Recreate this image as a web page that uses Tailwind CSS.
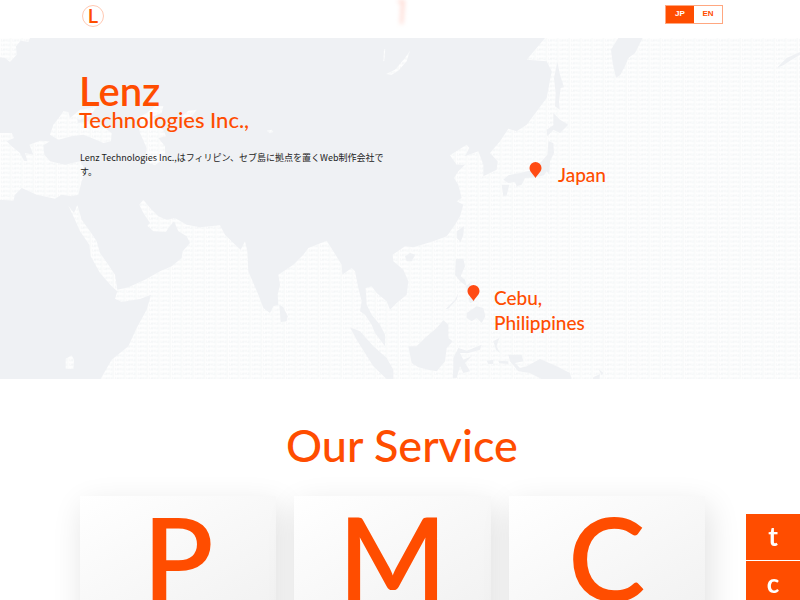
<!DOCTYPE html>
<html lang="ja">
<head>
<meta charset="utf-8">
<meta name="viewport" content="width=device-width, initial-scale=1">
<title>Lenz Technologies Inc.</title>
<script src="https://cdn.jsdelivr.net/npm/@tailwindcss/browser@4"></script>
</head>
<body class="h-screen overflow-hidden bg-white font-['Lato','Noto_Sans_CJK_JP',sans-serif] text-[#ff4d00]">
<header class="relative flex h-[38px] items-start justify-between pr-[77px] pl-[82px]">
  <a href="#" aria-label="Lenz" class="mt-[5px] flex size-[22px] items-center justify-center rounded-full border border-[#ffc9b3] text-[20px] leading-[18px] font-semibold"><span class="pb-[2px]">L</span></a>
  <svg class="absolute top-0 left-1/2 -ml-[4px] overflow-visible" width="12" height="30" viewBox="0 0 12 30" aria-hidden="true">
    <path d="M2 0h7l-2 24H4L5 3H2z" fill="#ffdcd5" class="blur-[2px]"/>
  </svg>
  <nav class="mt-[5px] flex h-[19px] border border-[#ffa780] font-['Liberation_Sans',sans-serif] text-[8px] leading-[16px] font-bold">
    <a href="#jp" class="w-[28px] bg-[#ff4d00] text-center text-white">JP</a>
    <a href="#en" class="w-[28px] text-center">EN</a>
  </nav>
</header>

<main>
  <section class="relative h-[341px] overflow-hidden bg-[#eff1f4]">
    <svg class="absolute inset-0 h-full w-full" viewBox="0 0 2400 1026" preserveAspectRatio="xMinYMin slice" aria-hidden="true">
      <defs>
        <pattern id="sea" width="34.2" height="13.7" patternUnits="userSpaceOnUse">
          <rect width="34.2" height="13.7" fill="#fefefe"/>
          <path d="M32 0V13.7" stroke="#f2f4f5" stroke-width="2"/>
          <path d="M4 3v7h4M10 7h5v-2h-5v5h5M18 10V5h4v5M25 5h5l-5 5h5" fill="none" stroke="#eff1f3" stroke-width="1.5"/>
        </pattern>
      </defs>
      <g fill="url(#sea)">
        <path d="M300 1026L335 965 385 925 410 870 440 815 453 770 420 783 365 792 345 782 352 760 335 745 300 705 272 655 268 620 240 580 225 545 205 503 222 525 232 500 245 545 270 580 290 610 300 645 325 680 345 710 352 755 385 748 435 725 480 700 515 685 545 660 548 640 570 615 560 595 535 580 522 550 505 570 498 582 460 580 452 572 442 563 450 555 430 525 418 500 430 485 450 510 475 535 500 545 525 540 560 560 600 568 660 562 675 590 700 615 722 635 735 610 742 640 745 700 760 735 775 770 790 810 810 825 820 805 835 800 833 770 840 740 835 710 880 680 910 650 925 630 980 608 1000 640 1025 680 1027 710 1055 690 1065 700 1075 750 1085 790 1080 820 1095 830 1115 860 1125 885 1155 925 1155 890 1140 860 1115 830 1100 800 1097 750 1115 745 1130 765 1160 790 1170 815 1190 795 1220 770 1225 730 1210 695 1180 670 1178 650 1215 625 1240 628 1300 610 1340 595 1365 560 1380 535 1390 500 1370 490 1385 480 1375 440 1362 420 1375 400 1395 380 1370 380 1350 352 1400 320 1408 330 1395 355 1435 340 1450 380 1450 415 1490 395 1493 370 1470 345 1500 310 1525 272 1550 280 1580 260 1640 180 1655 100 1640 70 1580 65 1635 0H2400V1026z"/>
        <path d="M0 0H90L85 12 62 8 48 25 50 50 30 72 15 60 0 58z"/>
        <path d="M0 285L35 285 42 300 20 310 35 325 60 345 72 368 82 370 75 345 100 350 88 320 120 308 150 310 130 322 133 350 150 370 195 380 240 370 250 385 255 405 245 430 235 470 215 475 185 470 165 482 110 470 65 450 45 470 40 488 0 485z"/>
        <path d="M150 290L160 260 180 235 190 220 205 222 210 240 230 240 235 255 265 250 300 260 335 285 333 310 310 315 275 300 250 290 215 295 175 305z"/>
        <path d="M210 240L240 215 290 207 270 235 240 245z"/>
        <path d="M412 240L440 225 465 205 490 205 485 225 460 235 465 265 490 275 498 295 475 300 495 325 495 360 465 382 435 370 440 330 420 285z"/>
        <path d="M540 240L565 218 590 215 575 235z"/>
        <path d="M197 962L215 952 222 965 220 993 197 992z"/>
        <path d="M1158 108L1185 95 1215 60 1230 38 1220 70 1195 98 1175 110zM1150 70L1152 35 1156 32 1153 68zM800 278L815 275 820 282 810 286z"/>
      </g>
      <g fill="#eff1f4">
        <path d="M1833 35L1855 0H1928L1920 15 1905 45 1885 60 1875 85 1860 112 1848 119 1838 75z"/>
        <path d="M1672 72L1680 110 1692 148 1682 150 1677 190 1679 215 1665 205 1667 165 1662 120z"/>
        <path d="M1660 225L1680 245 1705 260 1680 285 1660 275 1642 295 1640 275 1660 262z"/>
        <path d="M1645 310L1660 315 1662 345 1650 370 1648 410 1640 400 1632 412 1608 418 1575 420 1565 440 1550 445 1545 432 1525 435 1510 425 1525 412 1560 405 1600 395 1625 370 1642 350z"/>
        <path d="M1505 440L1528 440 1520 472 1510 475z"/>
        <path d="M1370 580L1392 565 1390 590 1382 612 1370 600z"/>
        <path d="M1215 655L1230 645 1246 650 1235 670 1220 670z"/>
        <path d="M1368 662L1390 662 1395 685 1382 715 1395 725 1400 745 1380 730 1365 710z"/>
        <path d="M1397 745L1410 735 1418 760 1405 765zM1405 780L1425 770 1425 790 1410 795zM1400 825L1430 805 1450 810 1456 835 1445 855 1430 840 1415 850 1400 840z"/>
        <path d="M1337 813L1365 785 1375 765 1370 785 1345 812z"/>
        <path d="M838 800L850 808 863 835 860 850 842 852z"/>
        <path d="M1050 868L1080 880 1120 925 1160 960 1180 995 1180 1023 1160 1023 1120 985 1095 945 1070 905z"/>
        <path d="M1225 925L1250 925 1275 900 1310 870 1330 847 1345 860 1345 900 1358 910 1340 930 1335 970 1310 1000 1285 995 1255 988 1235 975z"/>
        <path d="M1360 960L1375 930 1400 938 1445 920 1440 935 1405 945 1380 945 1390 965 1415 955 1395 975 1410 1000 1390 1005 1380 985 1370 1020 1358 1020 1360 990z"/>
        <path d="M1480 910L1498 900 1490 925 1500 945 1488 935zM1460 968L1480 965 1480 978 1465 978zM1495 968L1525 970 1525 978 1498 976z"/>
        <path d="M1525 950L1565 950 1570 970 1545 975 1560 990 1580 985 1620 963 1670 985 1710 1005 1715 1026H1630L1590 1005 1555 1000 1530 970z"/>
        <path d="M1780 1018L1800 1008 1798 1026H1778zM1795 992L1810 1005 1805 1012z"/>
        <path d="M2330 90L2360 60 2400 42V50L2370 68 2350 82z"/>
      </g>
    </svg>

    <div class="relative w-1/2 pt-[33px] pl-[79px]">
      <h1 class="flex flex-col">
        <span class="text-[40px] leading-[40px] font-semibold">Lenz</span>
        <span class="text-[22px] leading-[18px] font-medium">Technologies Inc.,</span>
      </h1>
      <p class="mt-[22px] pl-px font-['Noto_Sans_CJK_JP',sans-serif] text-[9px] leading-[14px] text-[#222]">Lenz Technologies Inc.,はフィリピン、セブ島に拠点を置くWeb制作会社です。</p>
    </div>

    <div class="absolute top-[124px] left-[529px] flex items-start gap-[16px]">
      <svg width="13" height="16" viewBox="0 0 13 16" aria-hidden="true"><path d="M6.500 0A6 6 0 0 0 .5 6C.5 9.500 4 12 6.500 16 9 12 12.500 9.500 12.500 6A6 6 0 0 0 6.500 0z" fill="#ff4b14"/></svg>
      <span class="text-[19px] leading-[25px] font-medium">Japan</span>
    </div>
    <div class="absolute top-[247px] left-[467px] flex items-start gap-[14px]">
      <svg width="13" height="16" viewBox="0 0 13 16" aria-hidden="true"><path d="M6.500 0A6 6 0 0 0 .5 6C.5 9.500 4 12 6.500 16 9 12 12.500 9.500 12.500 6A6 6 0 0 0 6.500 0z" fill="#ff4b14"/></svg>
      <span class="text-[19px] leading-[25px] font-medium">Cebu,<br>Philippines</span>
    </div>
  </section>

  <section class="pt-[38px]">
    <h2 class="pl-[4px] text-center text-[45px] leading-[56px] font-medium">Our Service</h2>
    <div class="mt-[23px] grid grid-cols-3 gap-[18px] pr-[95px] pl-[80px] text-[116px] leading-[122px] font-semibold">
      <article class="flex h-[260px] justify-center bg-[linear-gradient(150deg,#fff,#e9e9e9)] shadow-[4px_10px_30px_rgba(0,0,0,0.12)]"><h3>P</h3></article>
      <article class="flex h-[260px] justify-center bg-[linear-gradient(150deg,#fff,#e9e9e9)] shadow-[4px_10px_30px_rgba(0,0,0,0.12)]"><h3>M</h3></article>
      <article class="flex h-[260px] justify-center bg-[linear-gradient(150deg,#fff,#e9e9e9)] shadow-[4px_10px_30px_rgba(0,0,0,0.12)]"><h3>C</h3></article>
    </div>
  </section>
</main>

<aside class="fixed top-[514px] right-0 flex w-[54px] flex-col gap-px text-[26px] leading-[44px] font-bold text-white">
  <a href="#top" class="h-[46px] bg-[#ff4d00] text-center">t</a>
  <a href="#contact" class="h-[46px] bg-[#ff4d00] text-center">c</a>
</aside>
</body>
</html>
